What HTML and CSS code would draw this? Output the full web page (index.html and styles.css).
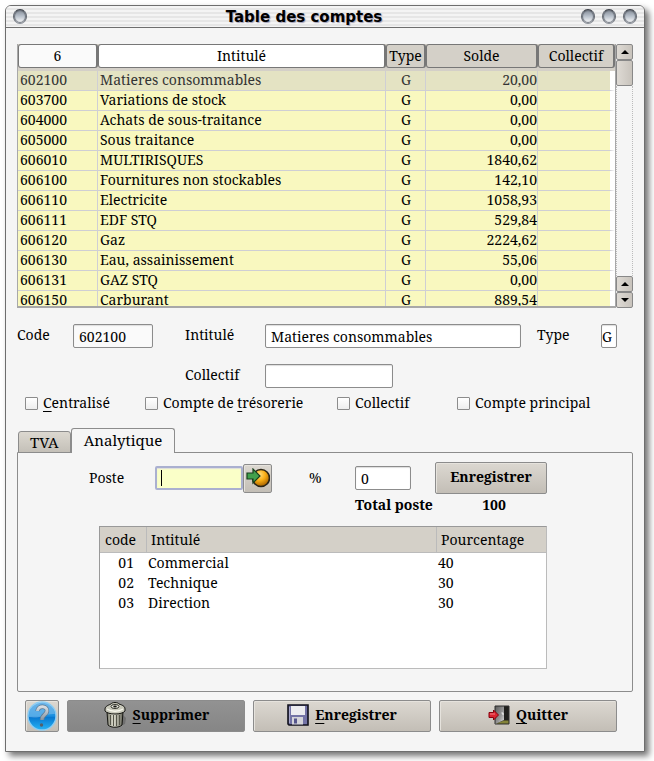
FILE: index.html
```html
<!DOCTYPE html>
<html lang="fr">
<head>
<meta charset="utf-8">
<title>Table des comptes</title>
<link rel="stylesheet" href="styles.css">
</head>
<body>
<main class="window">
  <header class="titlebar">
    <button class="orb" type="button" aria-label="Menu"></button>
    <h1>Table des comptes</h1>
    <button class="orb" type="button" aria-label="Réduire"></button>
    <button class="orb" type="button" aria-label="Agrandir"></button>
    <button class="orb" type="button" aria-label="Fermer"></button>
  </header>

  <div class="content">
    <section class="accounts">
      <div class="accounts-view">
        <table class="accounts-table">
          <colgroup><col class="c-code"><col><col class="c-type"><col class="c-solde"><col class="c-coll"></colgroup>
          <thead>
            <tr><th class="light"><span>6</span></th><th class="active"><span>Intitulé</span></th><th><span>Type</span></th><th><span>Solde</span></th><th><span>Collectif</span></th></tr>
          </thead>
          <tbody>
            <tr class="selected"><td>602100</td><td>Matieres consommables</td><td>G</td><td>20,00</td><td></td></tr>
            <tr><td>603700</td><td>Variations de stock</td><td>G</td><td>0,00</td><td></td></tr>
            <tr><td>604000</td><td>Achats de sous-traitance</td><td>G</td><td>0,00</td><td></td></tr>
            <tr><td>605000</td><td>Sous traitance</td><td>G</td><td>0,00</td><td></td></tr>
            <tr><td>606010</td><td>MULTIRISQUES</td><td>G</td><td>1840,62</td><td></td></tr>
            <tr><td>606100</td><td>Fournitures non stockables</td><td>G</td><td>142,10</td><td></td></tr>
            <tr><td>606110</td><td>Electricite</td><td>G</td><td>1058,93</td><td></td></tr>
            <tr><td>606111</td><td>EDF STQ</td><td>G</td><td>529,84</td><td></td></tr>
            <tr><td>606120</td><td>Gaz</td><td>G</td><td>2224,62</td><td></td></tr>
            <tr><td>606130</td><td>Eau, assainissement</td><td>G</td><td>55,06</td><td></td></tr>
            <tr><td>606131</td><td>GAZ STQ</td><td>G</td><td>0,00</td><td></td></tr>
            <tr><td>606150</td><td>Carburant</td><td>G</td><td>889,54</td><td></td></tr>
          </tbody>
        </table>
      </div>
      <div class="scrollbar">
        <button type="button" aria-label="Monter"><svg width="8" height="4" viewBox="0 0 8 4"><path d="M4 0L8 4H0z"/></svg></button>
        <div class="thumb"></div>
        <div class="track"></div>
        <button type="button" aria-label="Page haut"><svg width="8" height="4" viewBox="0 0 8 4"><path d="M4 0L8 4H0z"/></svg></button>
        <button type="button" aria-label="Descendre"><svg width="8" height="4" viewBox="0 0 8 4"><path d="M0 0H8L4 4z"/></svg></button>
      </div>
    </section>

    <form class="details">
      <label for="code">Code</label>
      <input id="code" class="field readonly" value="602100" readonly>
      <label class="c4" for="intitule">Intitulé</label>
      <input id="intitule" class="field" value="Matieres consommables">
      <label class="c7" for="type">Type</label>
      <input id="type" class="field tight" value="G">
      <label class="c4" for="collectif">Collectif</label>
      <input id="collectif" class="field half" value="">
    </form>

    <div class="checks">
      <label><input type="checkbox"><span><u>C</u>entralisé</span></label>
      <label><input type="checkbox"><span>Compte de <u>t</u>résorerie</span></label>
      <label><input type="checkbox"><span>Collectif</span></label>
      <label><input type="checkbox"><span>Compte principal</span></label>
    </div>

    <div class="tabs" role="tablist">
      <button class="tab" type="button" role="tab">TVA</button>
      <button class="tab current" type="button" role="tab" aria-selected="true">Analytique</button>
    </div>
    <section class="panel">
      <form class="entry">
        <label for="poste">Poste</label>
        <input id="poste" class="field focused" value="">
        <button class="btn pick" type="button" aria-label="Choisir un poste">
          <svg width="24" height="20" viewBox="0 0 24 20">
            <defs><radialGradient id="ball" cx=".4" cy=".3" r=".7"><stop offset="0" stop-color="#ffdf80"/><stop offset=".5" stop-color="#f9ae15"/><stop offset="1" stop-color="#a86300"/></radialGradient></defs>
            <circle cx="15" cy="10" r="8.5" fill="url(#ball)" stroke="#2b2517" stroke-width="1.6"/>
            <path d="M1 5h6V1l7 7-7 7v-4H1z" fill="#41a04c" stroke="#173e1c" stroke-width="1.2"/>
          </svg>
        </button>
        <label class="percent" for="pct">%</label>
        <input id="pct" class="field" value="0">
        <button class="btn save" type="button">Enregistrer</button>
        <strong class="total-label">Total poste</strong>
        <strong class="total">100</strong>
      </form>

      <div class="list">
        <table>
          <colgroup><col class="l-code"><col><col class="l-pct"></colgroup>
          <thead><tr><th>code</th><th>Intitulé</th><th>Pourcentage</th></tr></thead>
          <tbody>
            <tr><td>01</td><td>Commercial</td><td>40</td></tr>
            <tr><td>02</td><td>Technique</td><td>30</td></tr>
            <tr><td>03</td><td>Direction</td><td>30</td></tr>
          </tbody>
        </table>
      </div>
    </section>

    <footer class="actions">
      <button class="btn help" type="button" aria-label="Aide">
        <svg width="30" height="30" viewBox="0 0 30 30">
          <defs>
            <linearGradient id="blue" x1="0" y1="0" x2="0" y2="1"><stop offset="0" stop-color="#3b9be0"/><stop offset=".5" stop-color="#1a8fe0"/><stop offset=".55" stop-color="#0878d0"/><stop offset="1" stop-color="#27b4f5"/></linearGradient>
            <linearGradient id="silver" x1="0" y1="0" x2="0" y2="1"><stop offset="0" stop-color="#d8dde2"/><stop offset="1" stop-color="#8795a2"/></linearGradient>
          </defs>
          <circle cx="15" cy="15" r="14" fill="url(#blue)" stroke="#8dcdf3" stroke-width="1.4"/>
          <path d="M2 16a13 13 0 0 1 26-3c-8-1-14 5-26 3z" fill="#fff" opacity=".25"/>
          <path d="M10.500 10c.5-6 10-5.500 9.500 0-.3 4-5 3.500-5 9" fill="none" stroke="#5d7a92" stroke-width="4.400"/>
          <path d="M10.500 10c.5-6 10-5.500 9.500 0-.3 4-5 3.500-5 9" fill="none" stroke="url(#silver)" stroke-width="3"/>
          <circle cx="14.500" cy="24" r="1.700" fill="#56606b"/>
        </svg>
      </button>
      <button class="btn pressed" type="button">
        <svg width="24" height="26" viewBox="0 0 24 26">
          <defs><linearGradient id="can" x1="0" y1="0" x2="1" y2="0"><stop offset="0" stop-color="#79796a"/><stop offset=".4" stop-color="#deded0"/><stop offset="1" stop-color="#66665a"/></linearGradient></defs>
          <path d="M17 24l5-2 1-6-3-3z" fill="#555" opacity=".5"/>
          <path d="M4 10l1 13c3 3 11 3 14 0l1-13z" fill="url(#can)" stroke="#161612"/>
          <path d="M7.500 13v10M10.500 13v11M13.500 13v11M16.500 13v10" stroke="#55554a"/>
          <path d="M2 7c0-3 4-4 6-5 1-2 7-2 8 0 3 1 6 2 6 5v2c-3 4-17 4-20 0z" fill="#c9c9bb" stroke="#161612"/>
          <path d="M4 7c4 3 12 3 16 0" fill="none" stroke="#f6f6ec" stroke-width="1.300"/>
          <ellipse cx="12" cy="4.500" rx="4" ry="2" fill="#efefe4" stroke="#33332b"/>
          <ellipse cx="12" cy="4.500" rx="1.800" ry="1" fill="#171714"/>
        </svg>
        <span><u>S</u>upprimer</span>
      </button>
      <button class="btn" type="button">
        <svg width="22" height="22" viewBox="0 0 22 22">
          <path d="M1 1h20v20H2l-1-1z" fill="#7373a6" stroke="#11111c" stroke-width="1.600"/>
          <path d="M4 2h14v9H4z" fill="#ececf0"/>
          <path d="M5 13h11v7.500H5z" fill="#d4d4da"/>
          <path d="M7 14.500h3v5H7z" fill="#55558c"/>
          <path d="M2.500 3v16" stroke="#a7a7cc"/>
        </svg>
        <span><u>E</u>nregistrer</span>
      </button>
      <button class="btn" type="button">
        <svg width="22" height="22" viewBox="0 0 22 22">
          <defs><linearGradient id="door" x1="0" y1="0" x2="1" y2="1"><stop offset="0" stop-color="#5d5d5d"/><stop offset=".6" stop-color="#9b9b9b"/><stop offset="1" stop-color="#e2e2e2"/></linearGradient></defs>
          <path d="M7 2h14v18H7z" fill="#20201d" stroke="#303030"/>
          <path d="M8 19.500l8-3h4.500v3z" fill="#84843a"/>
          <path d="M7.500 2.500H16V16l-8.500 4z" fill="url(#door)"/>
          <path d="M13.500 9h1.500v2" fill="none" stroke="#f5f5f5"/>
          <path d="M1 8.500h4.500V6l5 5-5 5v-2.500H1z" fill="#dc2530" stroke="#87000c"/>
          <path d="M2 10h5" stroke="#f47f85"/>
        </svg>
        <span><u>Q</u>uitter</span>
      </button>
    </footer>
  </div>
</main>
</body>
</html>
```
FILE: styles.css
```css
* { box-sizing: border-box; }

:root {
  --line: #8c8c8c;
  --edge: #6e6e6e;
  --face: #d4d0c8;
  --page: #f5f5f5;
}

body {
  margin: 0;
  padding: 5px 9px 9px 5px;
  background: #fff;
  color: #000;
  font: 14px/20px "Droid Serif", "Noto Serif", "DejaVu Serif Condensed", "DejaVu Serif", serif;
}

button, input { font: inherit; color: inherit; margin: 0; }
button { padding: 0; }
u { text-underline-offset: 3px; }

.window {
  border: 1px solid var(--edge);
  border-radius: 6px 6px 0 0;
  background: var(--page);
  box-shadow: 4px 4px 6px rgba(0, 0, 0, .55);
  overflow: hidden;
}

.titlebar {
  display: flex;
  align-items: center;
  gap: 7px;
  height: 22px;
  padding: 0 7px;
  border-bottom: 1px solid var(--edge);
  background: repeating-linear-gradient(#f4f4f4 0 2px, #e6e6e6 2px 4px);
}

.titlebar h1 {
  flex: 1;
  margin: 0;
  text-align: center;
  font: bold 15px/20px "DejaVu Sans", sans-serif;
  text-shadow: 1px 1px 1px #a0a0b8;
}

.orb {
  width: 14px;
  height: 15px;
  border: 1px solid;
  border-color: #3c4048 #666b74 #8b9098;
  border-radius: 50%;
  background: linear-gradient(#848c98, #bcc4ce 50%, #fff);
  box-shadow: inset 0 0 1px 1px #6a7079;
}

.content { padding: 16px 11px 19px; }

.accounts { display: flex; height: 264px; }

.accounts-view {
  flex: 1;
  overflow: hidden;
  border: 1px solid #a8a8a8;
  border-width: 0 1px 2px;
  background: var(--face);
}

table { border-collapse: separate; border-spacing: 0; table-layout: fixed; width: 100%; }
th, td { padding: 0; font-weight: normal; text-align: left; white-space: nowrap; }

.c-code { width: 80px; }
.c-type { width: 40px; }
.c-solde { width: 112px; }
.c-coll { width: 77px; }

.accounts-table th { height: 27px; padding-bottom: 3px; text-align: center; }
.accounts-table th span {
  display: block;
  height: 24px;
  border: 1px solid #777;
  border-right-width: 2px;
  border-radius: 3px;
  background: var(--face);
  line-height: 22px;
}
.accounts-table th.light span { background: #fafafa; }
.accounts-table th.active span { background: #fff; }

.accounts-table td {
  height: 20px;
  padding: 0 1px 2px 2px;
  border-right: 1px solid #cfcfd4;
  border-bottom: 1px solid #cfcfd4;
  background: #f9f8bf;
  line-height: 17px;
}
.accounts-table .selected td { background: #e4e3c3; color: #333; }
.accounts-table td:nth-child(3) { text-align: center; }
.accounts-table td:nth-child(4) { padding: 0 0 2px; text-align: right; }
.accounts-table td:last-child { border-right: 5px solid #fff; }

.scrollbar { display: flex; flex-direction: column; width: 17px; }
.scrollbar button {
  display: grid;
  place-items: center;
  height: 16px;
}
.scrollbar button, .thumb {
  border: 1px solid #888;
  border-radius: 2px;
  background: linear-gradient(90deg, #dedad4, #c8c3bc);
}
.thumb { height: 26px; }
.track { flex: 1; border: 1px dotted #bbb; border-width: 0 1px; }

.field {
  width: 100%;
  min-width: 0;
  height: 24px;
  padding: 0 5px;
  border: 1px solid var(--line);
  border-radius: 2px;
  background: #fff;
  box-shadow: inset 0 1px 1px #ddd;
  outline: none;
}
.readonly { background: #fafafa; }
.tight { padding: 0; }

.details {
  display: grid;
  grid-template-columns: 56px 80px 32px 80px 128px 1fr 16px 64px 16px;
  row-gap: 16px;
  align-items: center;
  margin: 16px 16px 0 0;
}
.details #intitule { grid-column: 5 / 7; }
.details .c4 { grid-column: 4; }
.details .c7 { grid-column: 8; }
.details label { padding-bottom: 2px; }

.checks {
  display: grid;
  grid-template-columns: 120px 192px 120px 1fr;
  margin: 5px 0 0 8px;
}
.checks label { display: flex; align-items: center; gap: 5px; }
.checks input {
  appearance: none;
  width: 13px;
  height: 13px;
  border: 1px solid var(--line);
  border-radius: 1px;
  background: linear-gradient(#fff, #eee);
}

.tabs {
  display: flex;
  align-items: flex-end;
  margin: 15px 0 -1px 1px;
  font-size: 15px;
}
.tab {
  height: 22px;
  padding: 0 11px;
  border: 1px solid var(--line);
  border-radius: 3px 3px 0 0;
  background: linear-gradient(#dcd8d0, #c4c0b8);
}
.tab.current {
  position: relative;
  height: 25px;
  padding: 0 12px 2px;
  border-bottom: 0;
  background: var(--page);
}

.panel {
  height: 240px;
  padding: 9px 85px 0 71px;
  border: 1px solid var(--line);
  border-radius: 0 2px 2px 2px;
}

.entry {
  display: grid;
  grid-template-columns: 66px 88px 29px 83px 56px 24px 1fr;
  row-gap: 1px;
  align-items: center;
}
.percent { padding-left: 37px; }
.entry .save { grid-column: 7; }

.btn {
  display: flex;
  align-items: center;
  justify-content: center;
  gap: 6px;
  height: 32px;
  padding-bottom: 2px;
  border: 1px solid var(--line);
  border-radius: 2px;
  background: linear-gradient(#dcd8d1, #c3beb6);
  box-shadow: inset 1px 1px #e6e3dd;
  font-weight: bold;
}
.pick { height: 29px; padding-bottom: 0; }
.help { padding-bottom: 0; }

.focused {
  border: 2px solid #aab0d0;
  background: linear-gradient(#000, #000) 4px center / 1px 16px no-repeat #faffc8;
}

.total-label { grid-column: 5 / 7; white-space: nowrap; }
.total { padding-left: 6px; text-align: center; }

.list {
  height: 143px;
  margin: 11px 0 0 10px;
  border: 1px solid #999;
  border-color: #999 #bbb #bbb #999;
  background: #fff;
}
.l-code { width: 47px; }
.l-pct { width: 109px; }
.list th {
  height: 26px;
  padding-left: 4px;
  border-right: 1px solid #bbb;
  border-bottom: 1px solid #bbb;
  background: var(--face);
}
.list th:first-child { padding-left: 5px; }
.list th:last-child { border-right: 0; }
.list td { height: 20px; padding-left: 1px; }
.list td:first-child { padding: 0 13px 0 0; text-align: right; }

.actions {
  display: grid;
  grid-template-columns: 34px 1fr 1fr 1fr;
  gap: 8px;
  margin: 8px 16px 0 8px;
}
.pressed { background: linear-gradient(#929292, #868686); box-shadow: none; }
```
